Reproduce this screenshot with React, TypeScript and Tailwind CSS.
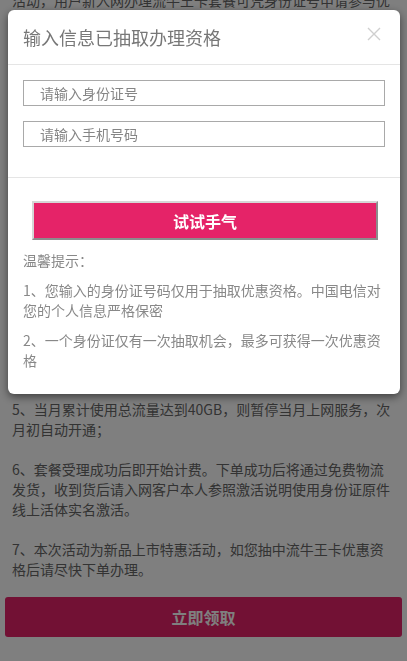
import React from "react"

const font = { fontFamily: '"Noto Sans CJK SC", "Noto Sans", sans-serif' }

const CloseIcon = () => (
    <svg width="14" height="14" viewBox="0 0 14 14" fill="none">
        <path d="M1 1 L13 13 M13 1 L1 13" stroke="#cfcfcf" strokeWidth="1.4" />
    </svg>
)

const RulesPage = () => {
    return (
        <div className="min-h-[661px] bg-white px-3 text-[14px] leading-5 text-[#666]" style={font}>
            <div className="-mt-[10px] h-[409px] overflow-hidden">
                <p>
                    活动，用户新入网办理流牛王卡套餐可凭身份证号申请参与优惠活动，每个身份证号仅限参与一次。
                    <br /><br />
                    1、本卡仅限新入网用户办理，每张身份证限办一张；
                    <br /><br />
                    2、套餐月费含国内通用流量及国内通话分钟数，超出部分按标准资费计费；
                    <br /><br />
                    3、本套餐不支持国际及港澳台漫游业务；
                    <br /><br />
                    4、套餐内流量当月有效，不可结转至次月使用；
                </p>
            </div>
            <p>
                5、当月累计使用总流量达到40GB，则暂停当月上网服务，次月初自动开通；
                <br /><br />
                6、套餐受理成功后即开始计费。下单成功后将通过免费物流发货，收到货后请入网客户本人参照激活说明使用身份证原件线上活体实名激活。
                <br /><br />
                7、本次活动为新品上市特惠活动，如您抽中流牛王卡优惠资格后请尽快下单办理。
            </p>
            <button className="mt-[18px] -mx-[7px] w-[397px] h-[40px] rounded-[3px] bg-[#e52368] text-white text-[16px] font-bold">
                立即领取
            </button>
        </div>
    )
}

const DrawModal = () => {
    return (
        <div className="fixed inset-0 bg-black/50" style={font}>
            <div className="ml-[8px] mt-[10px] w-[392px] rounded-md bg-white shadow-[0_3px_9px_rgba(0,0,0,0.5)]">
                <div className="flex items-center justify-between px-[15px] h-[55px] border-b border-[#e5e5e5]">
                    <h4 className="text-[18px] leading-[25px] text-[#777] font-normal pt-[1px]">输入信息已抽取办理资格</h4>
                    <button className="mr-[4px] -mt-[6px] flex items-center">
                        <CloseIcon />
                    </button>
                </div>
                <div className="px-[15px] pt-[15px] pb-[30px] flex flex-col gap-[15px] border-b border-[#e5e5e5]">
                    <input
                        type="text"
                        placeholder="请输入身份证号"
                        className="h-[26px] w-full border border-[#a9a9a9] pl-[16px] text-[14px] placeholder:text-[#858585] outline-none"
                    />
                    <input
                        type="text"
                        placeholder="请输入手机号码"
                        className="h-[26px] w-full border border-[#a9a9a9] pl-[16px] text-[14px] placeholder:text-[#858585] outline-none"
                    />
                </div>
                <div className="px-[15px] pt-[23px] pb-[24px] text-[14px] leading-5 text-[#888]">
                    <button className="block ml-[9px] w-[346px] h-[39px] border-2 border-t-[#d6d6d6] border-l-[#d6d6d6] border-b-[#8c8c8c] border-r-[#8c8c8c] bg-[#e52368] text-white text-[16px] font-bold">
                        试试手气
                    </button>
                    <p className="mt-[10px]">温馨提示：</p>
                    <p className="mt-[10px]">1、您输入的身份证号码仅用于抽取优惠资格。中国电信对您的个人信息严格保密</p>
                    <p className="mt-[10px]">2、一个身份证仅有一次抽取机会，最多可获得一次优惠资格</p>
                </div>
            </div>
        </div>
    )
}

export default function App() {
    return (
        <div className="relative overflow-hidden">
            <RulesPage />
            <DrawModal />
        </div>
    )
}
